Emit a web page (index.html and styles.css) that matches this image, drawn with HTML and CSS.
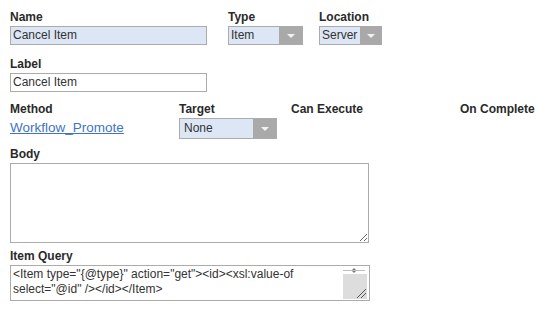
FILE: index.html
```html
<!DOCTYPE html>
<html lang="en">
<head>
  <meta charset="UTF-8" />
  <title>Action Form</title>
  <link rel="stylesheet" href="styles.css">
</head>
<body>
  <div class="form">
    <div class="row row-top">
      <div class="field col-name">
        <div class="lbl">Name</div>
        <div class="input blue w-name">Cancel Item</div>
      </div>
      <div class="field col-type">
        <div class="lbl">Type</div>
        <div class="select w-type"><span class="val">Item</span><span class="arrow"></span></div>
      </div>
      <div class="field">
        <div class="lbl">Location</div>
        <div class="select w-loc"><span class="val">Server</span><span class="arrow"></span></div>
      </div>
    </div>

    <div class="row row-label">
      <div class="field">
        <div class="lbl">Label</div>
        <div class="input w-name">Cancel Item</div>
      </div>
    </div>

    <div class="row row-method">
      <div class="field col-method">
        <div class="lbl">Method</div>
        <a class="link" href="#">Workflow_Promote</a>
      </div>
      <div class="field col-target">
        <div class="lbl">Target</div>
        <div class="select tall w-target"><span class="val">None</span><span class="arrow"></span></div>
      </div>
      <div class="field col-exec">
        <div class="lbl">Can Execute</div>
      </div>
      <div class="field">
        <div class="lbl">On Complete</div>
      </div>
    </div>

    <div class="row row-body">
      <div class="field">
        <div class="lbl">Body</div>
        <textarea class="area body-area"></textarea>
      </div>
    </div>

    <div class="row row-query">
      <div class="field">
        <div class="lbl">Item Query</div>
        <div class="query">
          <div class="query-text">&lt;Item type="{@type}" action="get"&gt;&lt;id&gt;&lt;xsl:value-of select="@id" /&gt;&lt;/id&gt;&lt;/Item&gt;</div>
          <div class="scroll">
            <svg class="spin" width="22" height="7" viewBox="0 0 22 7">
              <line x1="0" y1="3.5" x2="22" y2="3.5" stroke="#bdbdbd" stroke-width="1"/>
              <path d="M9 3 L11 1 L13 3 Z" fill="#777"/>
              <path d="M9 4 L11 6 L13 4 Z" fill="#777"/>
            </svg>
            <div class="thumb">
              <svg class="grip" width="10" height="10" viewBox="0 0 10 10">
                <line x1="1" y1="10" x2="10" y2="1" stroke="#555" stroke-width="1"/>
                <line x1="5" y1="10" x2="10" y2="5" stroke="#555" stroke-width="1"/>
              </svg>
            </div>
          </div>
        </div>
      </div>
    </div>
  </div>
</body>
</html>
```

FILE: styles.css
```css
body {
  margin: 0;
  background: #ffffff;
  font-family: "Liberation Sans", Arial, sans-serif;
  color: #222;
}

.form {
  padding: 10px 10px 0 10px;
}

.row {
  display: flex;
}

.field {
  display: flex;
  flex-direction: column;
}

.lbl {
  font-size: 12px;
  font-weight: bold;
  line-height: 14px;
  color: #2a2a2a;
  margin-bottom: 2px;
  white-space: nowrap;
}

.col-name { width: 218px; }
.col-type { width: 91px; }

.col-method { width: 169px; }
.col-target { width: 112px; }
.col-exec { width: 169px; }

.row-label { margin-top: 12px; }
.row-method { margin-top: 10px; }
.row-body { margin-top: 8px; }
.row-query { margin-top: 6px; }

.input {
  box-sizing: border-box;
  height: 19px;
  border: 1px solid #ababab;
  background: #fff;
  font-size: 12px;
  line-height: 17px;
  padding: 0 2px;
  color: #333;
}

.input.blue {
  background: #dde6f4;
}

.w-name { width: 197px; }

.select {
  box-sizing: border-box;
  height: 19px;
  display: flex;
  border: 1px solid #ababab;
  background: #dde6f4;
  font-size: 12px;
  color: #333;
}

.select .val {
  flex: 1;
  line-height: 17px;
  padding-left: 2px;
  overflow: hidden;
  white-space: nowrap;
}

.select .arrow {
  width: 23px;
  background: #a9a9a9;
  position: relative;
}

.select .arrow::after {
  content: "";
  position: absolute;
  left: 50%;
  top: 50%;
  margin-left: -4px;
  margin-top: -2px;
  border-left: 4px solid transparent;
  border-right: 4px solid transparent;
  border-top: 4px solid #f2f2f2;
}

.w-type { width: 75px; }
.w-loc { width: 63px; }
.w-loc .arrow { width: 21px; }

.select.tall {
  height: 21px;
}

.select.tall .val {
  line-height: 19px;
  padding-left: 4px;
}

.w-target { width: 98px; }

.link {
  font-size: 13.5px;
  line-height: 17px;
  color: #3f74c4;
  text-decoration: underline;
  margin-top: 1px;
}

.area {
  box-sizing: border-box;
  display: block;
  margin: 0;
  border: 1px solid #ababab;
  background: #fff;
  resize: both;
  font-family: "Liberation Sans", Arial, sans-serif;
}

.body-area {
  width: 359px;
  height: 80px;
}

.query {
  box-sizing: border-box;
  width: 360px;
  height: 36px;
  border: 1px solid #ababab;
  display: flex;
}

.query-text {
  flex: 1;
  font-size: 12px;
  line-height: 15px;
  padding: 1px 2px;
  color: #333;
}

.scroll {
  width: 26px;
  display: flex;
  flex-direction: column;
  padding: 1px 2px 1px 0;
}

.spin {
  display: block;
  flex: none;
  margin-left: 2px;
}

.thumb {
  flex: 1;
  background: #dddddd;
  position: relative;
  margin-left: 2px;
}

.grip {
  position: absolute;
  right: 1px;
  bottom: 1px;
}
```
